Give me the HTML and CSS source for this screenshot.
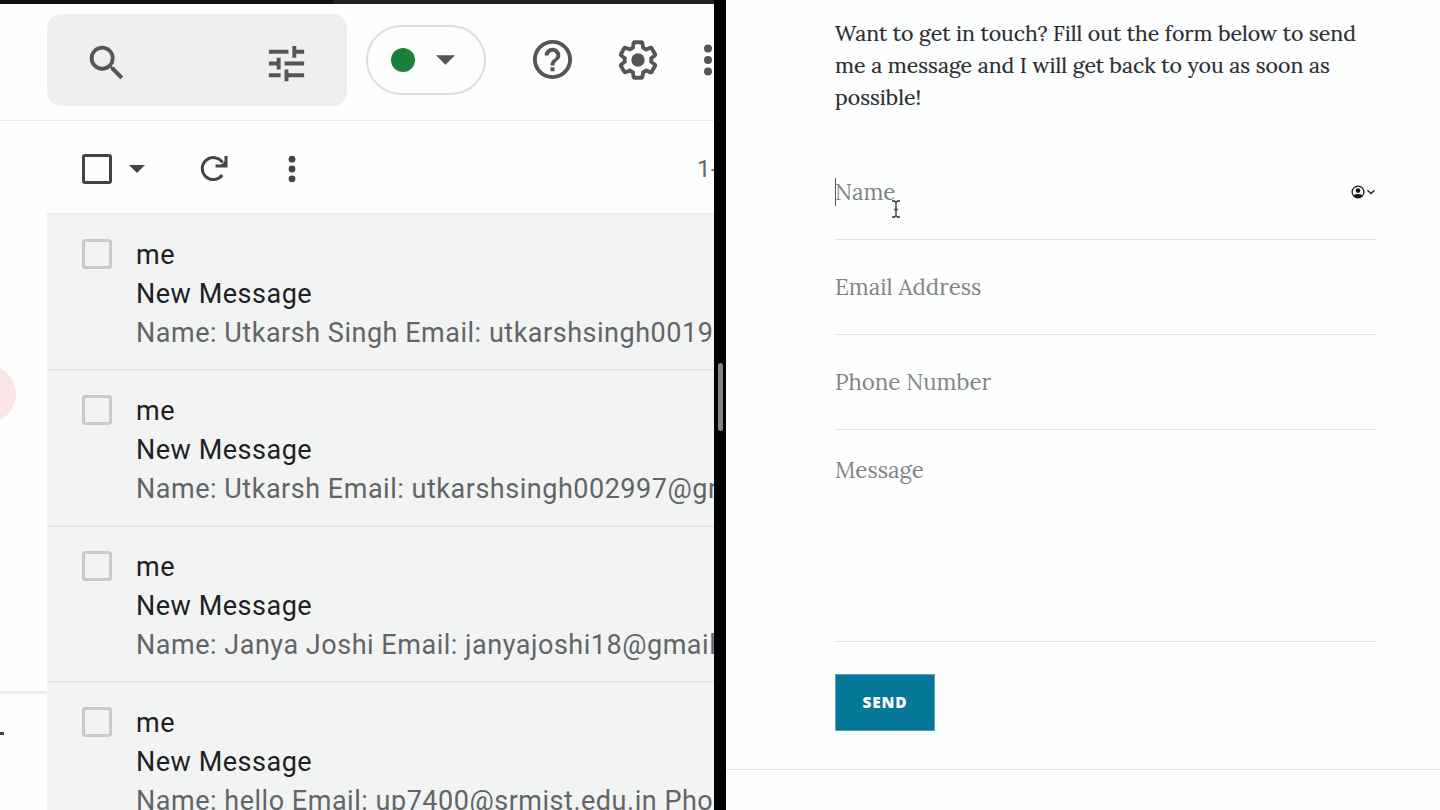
FILE: index.html
```html
<!DOCTYPE html>
<html lang="en">
<head>
<meta charset="utf-8">
<title>Contact form and inbox</title>
<link rel="stylesheet" href="styles.css">
</head>
<body>
<main class="split">
  <section class="mail">
    <div class="menubar"><span class="menubar-tail"></span></div>
    <header class="header">
      <div class="search">
        <svg class="icon-search" viewBox="0 0 24 24"><path d="M15.5 14h-.79l-.28-.27A6.47 6.47 0 0 0 16 9.5 6.5 6.5 0 1 0 9.5 16c1.61 0 3.09-.59 4.23-1.57l.27.28v.79l5 4.99L20.49 19l-4.99-5zm-6 0a4.5 4.5 0 1 1 0-9 4.5 4.5 0 0 1 0 9z"/></svg>
        <svg class="icon-tune" viewBox="0 0 24 24"><path d="M3 17v2h6v-2H3zM3 5v2h10V5H3zm10 16v-2h8v-2h-8v-2h-2v6h2zM7 9v2H3v2h4v2h2V9H7zm14 4v-2H11v2h10zm-6-4h2V7h4V5h-4V3h-2v6z"/></svg>
      </div>
      <div class="status">
        <span class="status-dot"></span>
        <svg class="status-caret" viewBox="0 0 20 10"><path d="M0 0h20L10 10z"/></svg>
      </div>
      <svg class="icon-help" viewBox="0 0 24 24"><path d="M11 18h2v-2h-2v2zm1-16a10 10 0 1 0 0 20 10 10 0 0 0 0-20zm0 18c-4.410 0-8-3.590-8-8s3.590-8 8-8 8 3.590 8 8-3.590 8-8 8zm0-14a4 4 0 0 0-4 4h2c0-1.100.9-2 2-2s2 .9 2 2c0 2-3 1.750-3 5h2c0-2.250 3-2.500 3-5a4 4 0 0 0-4-4z"/></svg>
      <svg class="icon-gear" viewBox="0 0 24 24"><path d="M13.85 22.25h-3.7c-.74 0-1.36-.54-1.45-1.27l-.27-1.89c-.27-.14-.53-.29-.79-.46l-1.8.72c-.7.26-1.47-.03-1.81-.65L2.200 15.530c-.35-.66-.2-1.440.36-1.880l1.530-1.190c-.01-.15-.02-.3-.02-.46 0-.15.01-.31.02-.46l-1.520-1.190c-.59-.45-.74-1.260-.37-1.880l1.850-3.190c.34-.62 1.110-.9 1.790-.63l1.810.73c.26-.17.52-.32.78-.46l.27-1.910c.09-.7.71-1.250 1.440-1.250h3.700c.74 0 1.360.54 1.450 1.270l.27 1.890c.27.14.53.29.79.46l1.800-.72c.71-.26 1.480.03 1.820.65l1.840 3.180c.36.66.2 1.440-.36 1.880l-1.520 1.190c.01.15.02.3.02.46s-.01.31-.02.46l1.520 1.190c.56.45.72 1.230.37 1.860l-1.860 3.220c-.34.62-1.110.9-1.800.63l-1.800-.72c-.26.17-.52.32-.78.46l-.27 1.910c-.1.68-.72 1.220-1.460 1.220zm-3.230-2h2.760l.37-2.550.53-.22c.44-.18.88-.44 1.340-.78l.45-.34 2.380.96 1.380-2.400-2.030-1.580.07-.56c.03-.26.06-.51.06-.78s-.03-.53-.06-.78l-.07-.56 2.030-1.580-1.390-2.400-2.390.96-.45-.35c-.42-.32-.87-.58-1.330-.77l-.52-.22-.37-2.550h-2.760l-.37 2.550-.53.21c-.44.19-.88.44-1.340.79l-.45.33-2.380-.95-1.390 2.390 2.030 1.580-.07.56a7 7 0 0 0-.06.79c0 .26.02.53.06.78l.07.56-2.030 1.580 1.380 2.400 2.390-.96.45.35c.43.33.86.58 1.330.77l.53.22.38 2.550z"/><circle cx="12" cy="12" r="3.500"/></svg>
      <svg class="icon-apps" viewBox="0 0 8 32"><circle cx="4" cy="4.500" r="4"/><circle cx="4" cy="16" r="4"/><circle cx="4" cy="27.500" r="4"/></svg>
    </header>
    <div class="mail-body">
      <aside class="rail">
        <div class="rail-top"><span class="rail-blob"></span></div>
        <span class="rail-dash"></span>
      </aside>
      <div class="inbox">
        <div class="toolbar">
          <span class="check check-all"></span>
          <svg class="check-caret" viewBox="0 0 16 8"><path d="M0 0h16L8 8z"/></svg>
          <svg class="icon-refresh" viewBox="0 0 28 28"><path d="M22.200 20A11 11 0 1 1 22.500 7.500M15.500 11h10.500V1" fill="none" stroke="#444" stroke-width="3"/><path d="M20 11l6-6v6z"/></svg>
          <svg class="icon-more" viewBox="0 0 8 28"><circle cx="4" cy="4.200" r="3.400"/><circle cx="4" cy="14" r="3.400"/><circle cx="4" cy="23.800" r="3.400"/></svg>
          <span class="pager">1-</span>
        </div>
        <article class="row"><span class="check"></span><div class="row-text"><div>me</div><div>New Message</div><div class="snippet">Name: Utkarsh Singh Email: utkarshsingh0019</div></div></article>
        <article class="row"><span class="check"></span><div class="row-text"><div>me</div><div>New Message</div><div class="snippet">Name: Utkarsh Email: utkarshsingh002997@gm</div></div></article>
        <article class="row"><span class="check"></span><div class="row-text"><div>me</div><div>New Message</div><div class="snippet">Name: Janya Joshi Email: janyajoshi18@gmail</div></div></article>
        <article class="row"><span class="check"></span><div class="row-text"><div>me</div><div>New Message</div><div class="snippet">Name: hello Email: up7400@srmist.edu.in Pho</div></div></article>
      </div>
    </div>
  </section>
  <div class="divider"><span class="grip"></span></div>
  <section class="contact">
    <div class="form">
      <p class="intro">Want to get in touch? Fill out the form below to send<br>me a message and I will get back to you as soon as<br>possible!</p>
      <div class="field">
        <span class="caret"></span><span>Name</span>
        <svg class="autofill" viewBox="0 0 25 14"><circle cx="7" cy="7" r="5.900" fill="none" stroke="#111" stroke-width="1.200"/><circle cx="7" cy="5.600" r="2.400"/><path d="M2.500 10.200Q7 8 11.500 10.200A5.700 5.700 0 0 1 2.500 10.200z"/><path d="M16.500 5.300l3.500 3.200 3.500-3.200" fill="none" stroke="#222" stroke-width="1.500"/></svg>
        <svg class="pointer" viewBox="0 0 10 18"><path d="M1 1h2.500L5 2.500 6.500 1H9M5 2.500v13M1 17h2.500L5 15.500 6.500 17H9M3.200 9.500h3.600" fill="none" stroke="#333" stroke-width="1.300"/></svg>
      </div>
      <div class="field"><span>Email Address</span></div>
      <div class="field"><span>Phone Number</span></div>
      <div class="field field-message"><span>Message</span></div>
      <button class="send">SEND</button>
    </div>
  </section>
</main>
</body>
</html>
```

FILE: styles.css
```css
* { box-sizing: border-box; }
body { margin: 0; background: #fdfefe; overflow: hidden; }
svg { display: block; flex: none; fill: #555; }
.split { display: flex; width: 1440px; height: 810px; overflow: hidden; }

.mail { width: 714px; height: 810px; flex: none; overflow: hidden; font-family: Roboto, sans-serif; background: #fdfefe; }
.menubar { height: 4px; background: #101117; display: flex; justify-content: flex-end; }
.menubar-tail { width: 381px; background: #261f20; }
.header { height: 117px; border-bottom: 1px solid #e9ebeb; padding: 10px 0 0 47px; display: flex; align-items: flex-start; width: 740px; }
.search { width: 300px; height: 92px; flex: none; border-radius: 14px; background: #eeefef; display: flex; justify-content: space-between; padding: 26px 37px 0 37px; }
.icon-search { width: 46px; height: 46px; }
.icon-tune { width: 47px; height: 47px; }
.status { width: 120px; height: 70px; flex: none; margin: 11px 0 0 19px; border: 2px solid #dcdede; border-radius: 35px; display: flex; align-items: center; padding-left: 23px; }
.status-dot { width: 24px; height: 24px; border-radius: 50%; background: #188038; }
.status-caret { width: 19px; height: 10px; margin-left: 21px; }
.icon-help { width: 47px; height: 47px; margin: 22px 0 0 43px; }
.icon-gear { width: 46px; height: 46px; margin: 23px 0 0 39px; }
.icon-apps { width: 8px; height: 32px; margin: 30px 0 0 43px; }

.mail-body { display: flex; height: 689px; }
.rail { width: 47px; flex: none; overflow: hidden; }
.rail-top { height: 573px; border-bottom: 3px solid #eceeee; padding-top: 244px; }
.rail-blob { display: block; width: 58px; height: 58px; margin-left: -42px; border-radius: 50%; background: #f8e5e4; }
.rail-dash { display: block; width: 4px; height: 3px; margin-top: 38px; background: #444; }

.inbox { flex: 1; min-width: 0; }
.toolbar { height: 92px; display: flex; align-items: center; padding: 4px 0 0 35px; white-space: nowrap; }
.toolbar svg { fill: #444; }
.check { width: 30px; height: 30px; flex: none; border: 3px solid #c8cacb; border-radius: 3px; }
.check-all { border-color: #444; }
.check-caret { width: 16px; height: 8px; margin-left: 17px; }
.icon-refresh { width: 28px; height: 28px; margin-left: 55px; }
.icon-more { width: 8px; height: 28px; margin-left: 60px; }
.pager { margin-left: 401px; font-size: 24px; line-height: 30px; color: #666; letter-spacing: 0.500px; }
.row { height: 156px; display: flex; padding: 20px 0 0 35px; background: #f2f4f4; border-top: 2px solid #e3e6e7; }
.row:first-of-type { border-top-color: #eceeef; }
.row .check { margin-top: 4px; }
.row-text { margin-left: 24px; margin-top: 1px; font-size: 27px; line-height: 39px; letter-spacing: 0.520px; color: #202124; white-space: nowrap; }
.snippet { color: #626567; }

.divider { width: 12px; flex: none; background: #000; display: flex; justify-content: center; align-items: flex-start; padding-top: 363px; }
.grip { width: 5px; height: 68px; border-radius: 3px; background: #858585; }

.contact { flex: 1; height: 770px; border-bottom: 1px solid #e4e6e6; padding: 17px 0 0 109px; font-family: Lora, "Liberation Serif", serif; }
.form { width: 542px; }
.intro { margin: 0; height: 128px; padding-top: 1px; font-size: 21.280px; line-height: 32px; color: #2a2d31; white-space: nowrap; -webkit-text-stroke: 0.200px #2a2d31; }
.field { position: relative; height: 95px; border-bottom: 1px solid #dfe1e1; padding-top: 30px; font-size: 22.300px; line-height: 34px; color: #818486; display: flex; }
.field-message { height: 212px; padding-top: 23px; }
.caret { position: absolute; left: 0; top: 33px; width: 1px; height: 28px; background: #555; }
.autofill { position: absolute; right: 1px; top: 40px; width: 25px; height: 14px; fill: #111; }
.pointer { position: absolute; left: 56px; top: 55px; width: 10px; height: 18px; }
.send { display: block; width: 100px; height: 57px; margin-top: 32px; border: 1px solid #5a9fc0; background: #047896; color: #fff; font: 800 15.500px "Open Sans", sans-serif; letter-spacing: 0.800px; padding: 0 0 2px; }
```
